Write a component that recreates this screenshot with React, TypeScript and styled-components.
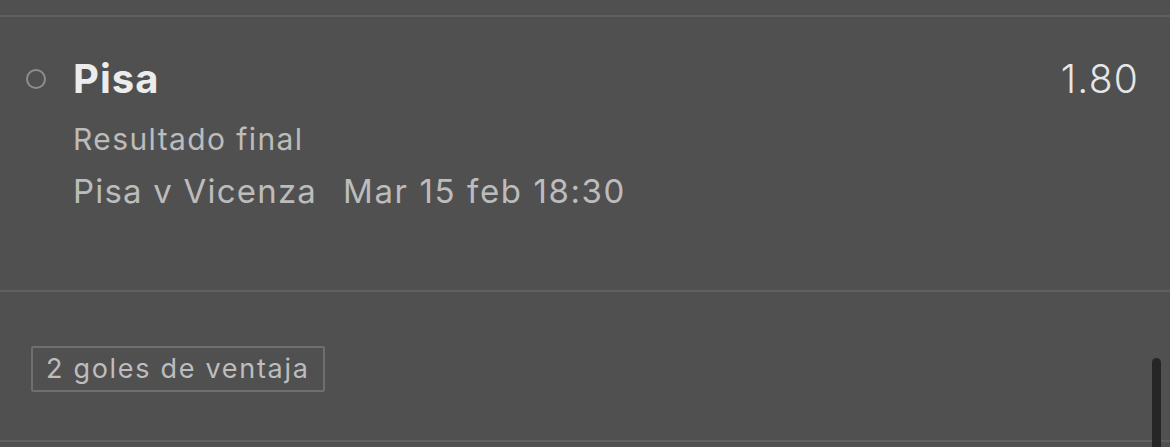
import styled, { createGlobalStyle } from "styled-components";

const GlobalStyle = createGlobalStyle`
  html, body {
    margin: 0;
    padding: 0;
    background: #505050;
  }
  body {
    font-family: Inter, "Noto Sans", sans-serif;
    -webkit-font-smoothing: antialiased;
  }
`;

const Screen = styled.div`
  position: relative;
  width: 1170px;
  height: 447px;
  overflow: hidden;
  background: #505050;
`;

const TopSpace = styled.div`
  height: 15px;
`;

const Divider = styled.div`
  height: 2px;
  background: #5f5f5f;
`;

const Selection = styled.div`
  height: 273px;
  padding: 38px 32px 0 26px;
  box-sizing: border-box;
`;

const HeaderRow = styled.div`
  display: flex;
  align-items: center;
`;

const Radio = styled.span`
  width: 16px;
  height: 16px;
  border: 2px solid #8e8e8e;
  border-radius: 50%;
  flex-shrink: 0;
  margin-right: 27px;
`;

const Team = styled.h2`
  flex: 1;
  margin: 0;
  font-size: 40px;
  font-weight: 700;
  line-height: 48px;
  letter-spacing: 1px;
  color: #ececec;
`;

const Odds = styled.span`
  font-size: 39px;
  font-weight: 300;
  line-height: 48px;
  letter-spacing: 1.2px;
  margin-right: -1px;
  color: #e6e6e6;
`;

const Details = styled.div`
  padding-left: 47px;
  margin-top: 15px;
  display: flex;
  flex-direction: column;
  gap: 10px;
`;

const Market = styled.div`
  font-size: 30px;
  line-height: 42px;
  letter-spacing: 1.4px;
  color: #bcbcbc;
`;

const Event = styled.div`
  display: flex;
  gap: 26px;
  font-size: 33px;
  line-height: 42px;
  color: #bcbcbc;
`;

const EventName = styled.span`
  letter-spacing: 1.2px;
`;

const Kickoff = styled.span`
  letter-spacing: 1.6px;
`;

const Footer = styled.div`
  height: 148px;
  padding: 54px 0 0 31px;
  box-sizing: border-box;
`;

const Tag = styled.span`
  display: inline-block;
  border: 2px solid #6f6f6f;
  border-radius: 2px;
  padding: 0 13px;
  font-size: 27px;
  line-height: 42px;
  letter-spacing: 1.7px;
  color: #bdbdbd;
`;

const ScrollThumb = styled.div`
  position: absolute;
  left: 1152px;
  top: 358px;
  width: 9px;
  height: 100px;
  border-radius: 5px;
  background: #262626;
`;

export default function App() {
  return (
    <Screen>
      <GlobalStyle />
      <TopSpace />
      <Divider />
      <Selection>
        <HeaderRow>
          <Radio />
          <Team>Pisa</Team>
          <Odds>1.80</Odds>
        </HeaderRow>
        <Details>
          <Market>Resultado final</Market>
          <Event>
            <EventName>Pisa v Vicenza</EventName>
            <Kickoff>Mar 15 feb 18:30</Kickoff>
          </Event>
        </Details>
      </Selection>
      <Divider />
      <Footer>
        <Tag>2 goles de ventaja</Tag>
      </Footer>
      <Divider />
      <ScrollThumb />
    </Screen>
  );
}
